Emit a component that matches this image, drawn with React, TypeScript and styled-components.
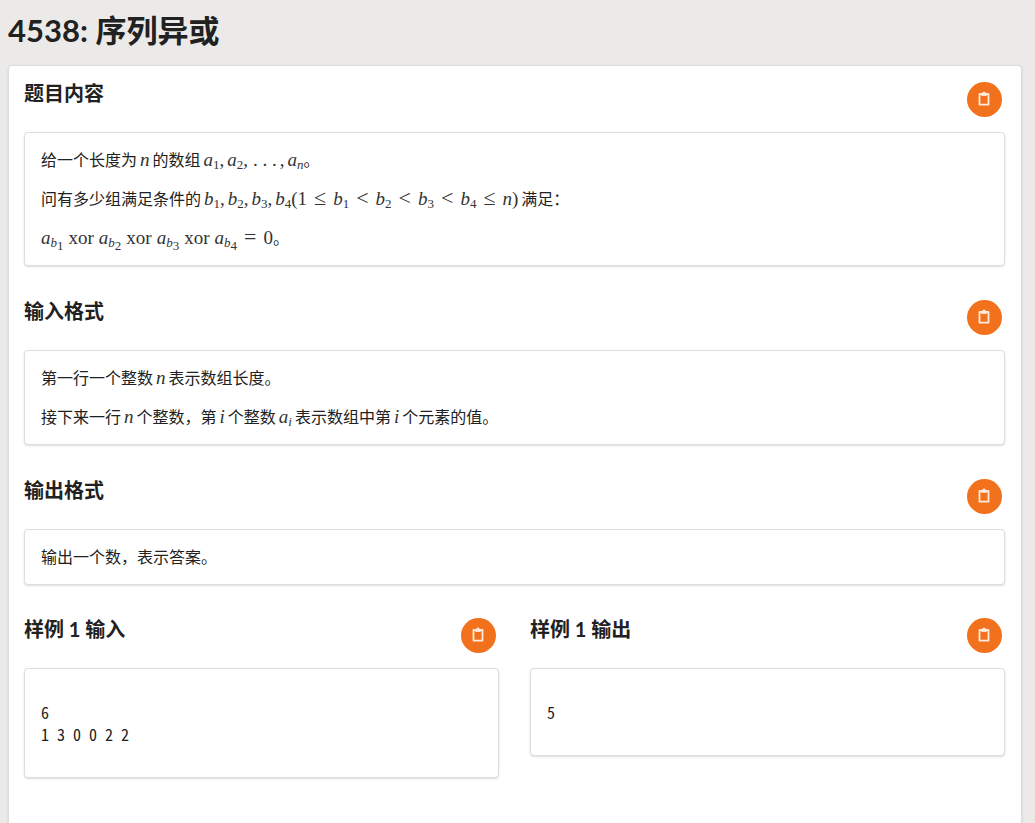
import React, { useId } from "react";
import styled, { createGlobalStyle } from "styled-components";

const GlobalStyle = createGlobalStyle`
  *, *::before, *::after { box-sizing: border-box; }
  body {
    margin: 0;
    background: #ebeae8;
    color: #212121;
    font-family: Lato, "Noto Sans CJK SC", sans-serif;
    font-size: 16px;
    line-height: 22px;
  }
`;

const Page = styled.main`
  display: flex;
  flex-direction: column;
  min-height: 100vh;
  padding: 0 13px 0 8px;
`;

const Title = styled.h1`
  margin: 8px 0 13px;
  font-size: 31px;
  line-height: 44px;
  font-weight: 700;
`;

const Card = styled.div`
  flex: 1;
  padding: 16px 16px 44px 15px;
  background: #fff;
  border: 1px solid #dddddc;
  border-bottom: 0;
  border-radius: 4px 4px 0 0;
  box-shadow: 0 1px 2px rgba(34, 36, 38, 0.15);
`;

const Section = styled.section`
  & + & { margin-top: 34px; }
`;

const Samples = styled.div`
  display: grid;
  grid-template-columns: 1fr 1fr;
  align-items: start;
  gap: 31px;
  margin-top: 33px;

  ${Section} { margin-top: 0; }
`;

const SectionHeader = styled.header`
  display: flex;
  justify-content: space-between;
  align-items: flex-start;
  padding-right: 3px;
  margin-bottom: 15px;
`;

const Heading = styled.h2`
  margin: 0;
  font-size: 20px;
  line-height: 22px;
  font-weight: 700;
`;

const CopyButton = styled.button`
  display: flex;
  align-items: center;
  justify-content: center;
  width: 35px;
  height: 35px;
  padding: 0;
  border: 0;
  border-radius: 50%;
  background: #f2711c;
  color: #fdeadd;
  cursor: pointer;
`;

const Box = styled.div`
  padding: 16px;
  background: #fff;
  border: 1px solid #dededf;
  border-radius: 4px;
  box-shadow: 0 1px 2px rgba(34, 36, 38, 0.15);
`;

const Formula = styled.span<{ $closed?: boolean }>`
  margin-left: 3px;
  margin-right: ${(p) => (p.$closed ? 0 : 3)}px;
  color: #333;
  font-family: "Liberation Serif", serif;
  font-size: 19px;
  line-height: 1;
  white-space: nowrap;
`;

const Paragraph = styled.p`
  margin: 0;
  & + & {
    margin-top: 16px;
    line-height: 23px;
  }
`;

const Equation = styled(Paragraph)`
  ${Formula} { margin-left: 0; }
`;

const Code = styled.pre`
  margin: 16px 0;
  font-family: "Noto Sans Mono CJK SC", "Liberation Mono", monospace;
  font-size: 16px;
  line-height: 22px;
`;

const Subscript = styled.sub`
  font-size: 13px;
  line-height: 0;
  vertical-align: -3px;
`;

const Relation = styled.span`
  margin: 0 7px;
  font-size: 22px;
  line-height: 0;
`;

const Operator = styled.span`
  margin: 0 5px;
`;

const Comma = styled.span`
  margin-right: 3px;
`;

const Dots = styled.span`
  margin: 0 3px 0 2px;
`;

const ClipboardIcon = () => (
  <svg width="15" height="19" viewBox="0 0 15 19" fill="none" stroke="currentColor" aria-hidden="true">
    <path d="M2.5 4h9v10.6h-9z" strokeWidth="1.8" strokeLinejoin="round" />
    <path d="M4.2 3.4h5.6v2.5H4.2z" fill="currentColor" stroke="none" />
    <circle cx="7" cy="3.2" r="1.7" fill="currentColor" stroke="none" />
  </svg>
);

const Term = ({ name, index }: { name: string; index?: React.ReactNode }) => (
  <>
    <i>{name}</i>
    {index !== undefined && <Subscript>{index}</Subscript>}
  </>
);

const NestedTerm = ({ index }: { index: number }) => (
  <Term name="a" index={<Term name="b" index={index} />} />
);

const Block = ({ title, children }: { title: string; children: React.ReactNode }) => {
  const id = useId();
  return (
    <Section aria-labelledby={id}>
      <SectionHeader>
        <Heading id={id}>{title}</Heading>
        <CopyButton type="button" aria-label={`复制${title}`}>
          <ClipboardIcon />
        </CopyButton>
      </SectionHeader>
      <Box>{children}</Box>
    </Section>
  );
};

export default function App() {
  return (
    <>
      <GlobalStyle />
      <Page>
        <Title>4538: 序列异或</Title>
        <Card>
          <Block title="题目内容">
            <Paragraph>
              给一个长度为
              <Formula><Term name="n" /></Formula>
              的数组
              <Formula $closed>
                <Term name="a" index={1} /><Comma>,</Comma>
                <Term name="a" index={2} /><Comma>,</Comma>
                <Dots>. . .</Dots><Comma>,</Comma>
                <Term name="a" index={<i>n</i>} />
              </Formula>
              。
            </Paragraph>
            <Paragraph>
              问有多少组满足条件的
              <Formula>
                <Term name="b" index={1} /><Comma>,</Comma>
                <Term name="b" index={2} /><Comma>,</Comma>
                <Term name="b" index={3} /><Comma>,</Comma>
                <Term name="b" index={4} />
                (1<Relation>≤</Relation>
                <Term name="b" index={1} /><Relation>&lt;</Relation>
                <Term name="b" index={2} /><Relation>&lt;</Relation>
                <Term name="b" index={3} /><Relation>&lt;</Relation>
                <Term name="b" index={4} /><Relation>≤</Relation>
                <Term name="n" />)
              </Formula>
              满足：
            </Paragraph>
            <Equation>
              <Formula $closed>
                <NestedTerm index={1} /><Operator>xor</Operator>
                <NestedTerm index={2} /><Operator>xor</Operator>
                <NestedTerm index={3} /><Operator>xor</Operator>
                <NestedTerm index={4} /><Relation>=</Relation>0
              </Formula>
              。
            </Equation>
          </Block>
          <Block title="输入格式">
            <Paragraph>
              第一行一个整数
              <Formula><Term name="n" /></Formula>
              表示数组长度。
            </Paragraph>
            <Paragraph>
              接下来一行
              <Formula><Term name="n" /></Formula>
              个整数，第
              <Formula><Term name="i" /></Formula>
              个整数
              <Formula><Term name="a" index={<i>i</i>} /></Formula>
              表示数组中第
              <Formula><Term name="i" /></Formula>
              个元素的值。
            </Paragraph>
          </Block>
          <Block title="输出格式">
            <Paragraph>输出一个数，表示答案。</Paragraph>
          </Block>
          <Samples>
            <Block title="样例 1 输入">
              <Code>{"6\n1 3 0 0 2 2"}</Code>
            </Block>
            <Block title="样例 1 输出">
              <Code>5</Code>
            </Block>
          </Samples>
        </Card>
      </Page>
    </>
  );
}
